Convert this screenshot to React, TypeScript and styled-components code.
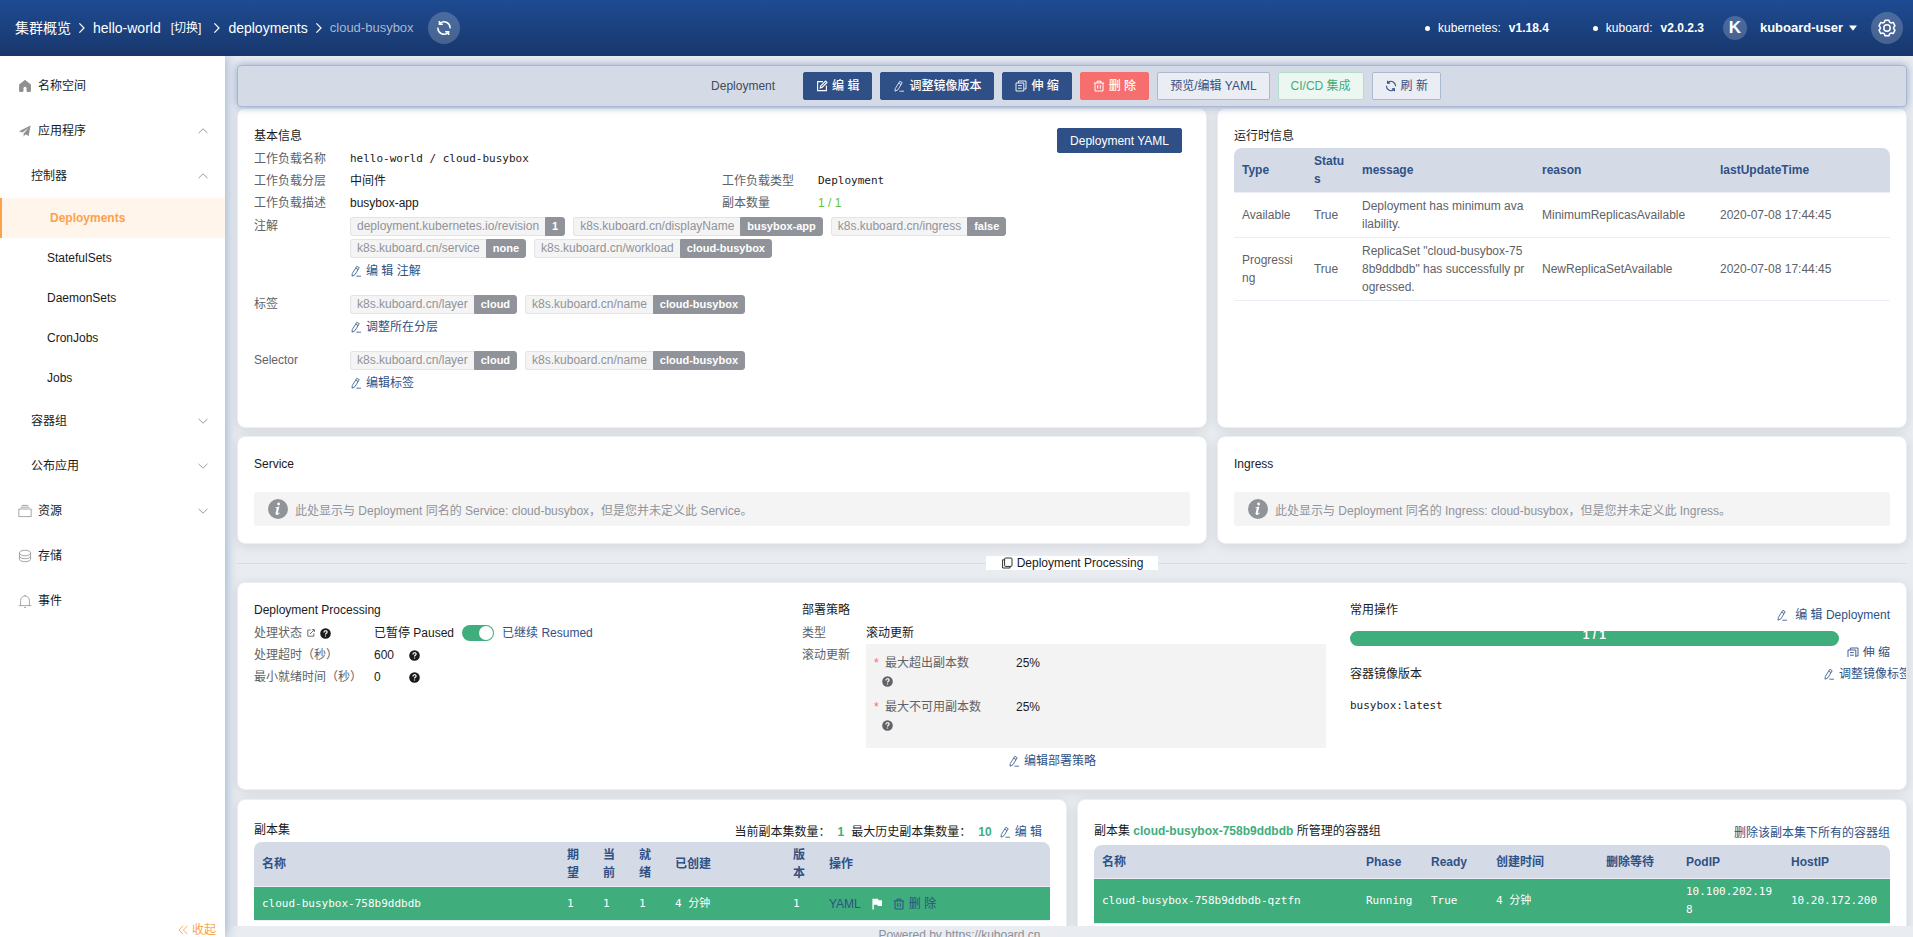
import React from "react";
import styled, { createGlobalStyle, css } from "styled-components";

const navy = "#2f5186";
const green = "#3fad7c";
const orange = "#fda14a";
const headBg = "#d5dbe6";
const sans = `"Liberation Sans", "Noto Sans CJK SC", sans-serif`;
const mono = `"DejaVu Sans Mono", "Noto Sans CJK SC", monospace`;

const GlobalStyle = createGlobalStyle`
  *, *::before, *::after { box-sizing: border-box; }
  body { margin: 0; font-family: ${sans}; font-size: 12px; line-height: 22px; color: #1a1a1a; }
  button { font: inherit; color: inherit; background: none; border: 0; padding: 0; margin: 0; cursor: pointer; }
  a { color: inherit; text-decoration: none; }
  h1, h2, ul { margin: 0; padding: 0; font: inherit; list-style: none; }
  svg { display: block; flex: none; }
`;

/* ---------- icons ---------- */

const Svg = styled.svg.attrs<{ $size?: number }>({ fill: "none", stroke: "currentColor", "aria-hidden": true })<{ $size?: number }>`
  width: ${(p) => p.$size ?? 12}px;
  height: ${(p) => p.$size ?? 12}px;
`;
type IconProps = { size?: number };

const PencilIcon = () => (
  <Svg viewBox="0 0 12 12" strokeWidth="0.8" strokeLinejoin="round">
    <path d="M6.8 1.3 9.2 2.7 5 9.7 2 11.2 2.3 8.5ZM5.7 3.2 8.1 4.6M6.4 11.2H11" />
  </Svg>
);
const EditSquareIcon = () => (
  <Svg viewBox="0 0 12 12" strokeWidth="1.1">
    <path d="M7 1.6H1.6V10.6H10.4V5.5M4.2 7.9 4.6 6 9.6 1 11 2.4 6 7.4Z" />
  </Svg>
);
const DocumentsIcon = () => (
  <Svg viewBox="0 0 12 12" strokeWidth="0.9">
    <path d="M3.4 3V1H11V9H9.2M1 3H8.8V11H1ZM3 5.6H6.8M3 8.2H6.8" />
  </Svg>
);
const CopyIcon = () => (
  <Svg viewBox="0 0 12 12" strokeWidth="0.9">
    <rect x="3.6" y="1" width="7.4" height="8.4" rx="1" />
    <path d="M3.4 2.8H1.6V11H9V9.6" />
  </Svg>
);
const TrashIcon = () => (
  <Svg viewBox="0 0 12 12" strokeWidth="1">
    <path d="M.8 3H11.2M4 3V1.2H8V3M2 3V11H10V3M4.7 5V8.8M7.3 5V8.8" />
  </Svg>
);
const RefreshIcon = ({ size }: IconProps) => (
  <Svg $size={size} viewBox="0 0 16 16" strokeWidth="1.5">
    <path d="M4.2 3.2A6 6 0 0 1 14 8.4M11.8 12.8A6 6 0 0 1 2 7.6M3.4 1V4.2H6.8M12.6 15V11.8H9.2" />
  </Svg>
);
const GearIcon = () => (
  <Svg $size={18} viewBox="0 0 18 18" strokeWidth="1.5" strokeLinejoin="round">
    <path d="M7 1.2H11L11.6 3.2 13.2 4 15.2 3.4 17 6.8 15.6 8.4V9.6L17 11.2 15.2 14.6 13.2 14 11.6 14.8 11 16.8H7L6.4 14.8 4.8 14 2.8 14.6 1 11.2 2.4 9.6V8.4L1 6.8 2.8 3.4 4.8 4 6.4 3.2Z" />
    <circle cx="9" cy="9" r="3.2" />
  </Svg>
);
const HouseIcon = () => (
  <Svg $size={14} viewBox="0 0 14 14" stroke="none">
    <path fill="currentColor" d="M7 1.4 12.4 5.6V12.4H9V9.2A2 2 0 0 0 5 9.2V12.4H1.6V5.6Z" />
  </Svg>
);
const PlaneIcon = () => (
  <Svg $size={14} viewBox="0 0 14 14">
    <path fill="currentColor" stroke="none" d="M12.6 1.6 10.6 12 7.4 10.2 5.6 12.8V9.4L10.8 3.8 4.4 8.6 1 7.2Z" />
  </Svg>
);
const BoxIcon = () => (
  <Svg $size={14} viewBox="0 0 14 14" strokeWidth="0.8">
    <path d="M.8 5H13.2V12.6H.8ZM2.6 3.2H11.4M3.8 1.4H10.2" />
  </Svg>
);
const DiskIcon = () => (
  <Svg $size={14} viewBox="0 0 14 14" strokeWidth="0.8">
    <ellipse cx="7" cy="4" rx="5.6" ry="2.8" />
    <path d="M1.4 4V10C1.4 13.6 12.6 13.6 12.6 10V4M1.4 7C1.4 10.6 12.6 10.6 12.6 7" />
  </Svg>
);
const BellIcon = () => (
  <Svg $size={14} viewBox="0 0 14 14" strokeWidth="0.8">
    <path d="M.6 11.6H13.4M2.6 11.6V6.4A4.4 4.4 0 0 1 11.4 6.4V11.6M7 2V.8M6 13.4H8" />
  </Svg>
);
const ChevronIcon = ({ up }: { up?: boolean }) => (
  <Svg $size={10} viewBox="0 0 10 10" strokeWidth="0.9">
    <path d={up ? "M.5 7.2 5 2.8 9.5 7.2" : "M.5 2.8 5 7.2 9.5 2.8"} />
  </Svg>
);
const ArrowRightIcon = () => (
  <Svg $size={10} viewBox="0 0 10 10" strokeWidth="1.2">
    <path d="M2.4.4 7 5 2.4 9.6" />
  </Svg>
);
const DoubleLeftIcon = () => (
  <Svg $size={10} viewBox="0 0 10 10" strokeWidth="0.9">
    <path d="M5 .8 1 5 5 9.2M9.4.8 5.4 5 9.4 9.2" />
  </Svg>
);
const LinkOutIcon = () => (
  <Svg $size={8} viewBox="0 0 8 8" strokeWidth="0.9">
    <path d="M3.6 1H.8V7.2H6.8V4.4M3 5 7.2.8M4.8.6H7.4V3" />
  </Svg>
);
const QuestionIcon = () => (
  <Svg $size={11} viewBox="0 0 11 11">
    <circle cx="5.5" cy="5.5" r="5.3" fill="currentColor" stroke="none" />
    <path stroke="#fff" strokeWidth="1.2" d="M3.9 4.4C3.9 2.2 7.1 2.2 7.1 4.2 7.1 5.4 5.5 5.3 5.5 6.6M5.5 7.4V8.6" />
  </Svg>
);
const InfoIcon = () => (
  <Svg $size={20} viewBox="0 0 20 20">
    <circle cx="10" cy="10" r="10" fill="currentColor" stroke="none" />
    <path fill="#fff" stroke="none" d="M10.6 3.6A1.4 1.4 0 1 1 10.6 6.4 1.4 1.4 0 1 1 10.6 3.6ZM7.4 8.4 11.4 7.6 9.8 14C9.8 14.8 10.6 14.4 11.4 13.6L11.8 14C10.4 16.4 7.2 16.6 7.6 14.2L8.8 9.2 7.4 9Z" />
  </Svg>
);
const FlagIcon = () => (
  <Svg $size={12} viewBox="0 0 12 12">
    <path fill="currentColor" stroke="none" d="M1.4.8H7L7.6 2.2H11V8H6.8L6.2 6.8H2.8V11.4H1.4Z" />
  </Svg>
);
const CaretIcon = () => (
  <Svg $size={8} viewBox="0 0 8 8">
    <path fill="currentColor" stroke="none" d="M0 1.6H8L4 6.8Z" />
  </Svg>
);

/* ---------- shell ---------- */

const Shell = styled.div`
  display: flex;
  flex-direction: column;
  height: 100vh;
  overflow: hidden;
`;
const Header = styled.header`
  position: relative;
  z-index: 4;
  display: flex;
  align-items: center;
  justify-content: space-between;
  flex: none;
  height: 56px;
  padding: 0 10px 0 15px;
  color: #fff;
  background: linear-gradient(#1e4b92, #18376c);
`;
const Crumbs = styled.nav`
  display: flex;
  align-items: center;
  gap: 6px;
  font-size: 14px;
`;
const CrumbSmall = styled.button`
  padding: 0 5px 0 4px;
  font-size: 12px;
`;
const CrumbCurrent = styled.span`
  font-size: 13px;
  color: #a9b6cd;
`;
const RoundButton = styled.button<{ $gap?: boolean }>`
  display: grid;
  place-items: center;
  width: 32px;
  height: 32px;
  margin-left: ${(p) => (p.$gap ? 8 : 0)}px;
  border-radius: 50%;
  background: rgba(255, 255, 255, 0.2);
`;
const HeaderRight = styled.div`
  display: flex;
  align-items: center;
`;
const Version = styled.div`
  display: flex;
  align-items: center;
  gap: 8px;
  margin-right: 44px;
  &::before {
    content: "";
    width: 5px;
    height: 5px;
    border-radius: 50%;
    background: #fff;
  }
  &:nth-child(2) { margin-right: 19px; }
`;
const Avatar = styled.span`
  display: grid;
  place-items: center;
  width: 24px;
  height: 24px;
  border-radius: 50%;
  background: rgba(255, 255, 255, 0.2);
  font-size: 17px;
  font-weight: bold;
`;
const UserButton = styled.button`
  display: flex;
  align-items: center;
  gap: 6px;
  margin: 0 14px 0 13px;
  font-size: 13px;
  font-weight: bold;
`;
const Body = styled.div`
  display: flex;
  flex: 1;
  min-height: 0;
`;

/* ---------- sidebar ---------- */

const Sidebar = styled.aside`
  position: relative;
  z-index: 3;
  display: flex;
  flex-direction: column;
  justify-content: space-between;
  flex: none;
  width: 225px;
  padding-top: 7px;
  background: #fff;
  box-shadow: 0 0 12px #8ea4c6;
`;
const MenuItem = styled.button<{ $level: 0 | 1 | 2; $active?: boolean }>`
  display: flex;
  align-items: center;
  gap: 6px;
  width: 100%;
  height: ${(p) => (p.$level === 2 ? 40 : 45)}px;
  padding: 0 17px 0 ${(p) => [18, 31, 47][p.$level]}px;
  text-align: left;
  color: #1a1a1a;
  svg { color: #909090; }
  ${(p) =>
    p.$active &&
    css`
      border-left: 2px solid ${orange};
      padding-left: 48px;
      background: #fff5eb;
      color: ${orange};
      font-weight: bold;
    `}
`;
const MenuLabel = styled.span`
  flex: 1;
`;
const Collapse = styled.button`
  display: flex;
  align-items: center;
  align-self: flex-end;
  gap: 4px;
  height: 14px;
  padding-right: 9px;
  line-height: 14px;
  color: ${orange};
`;

/* ---------- main ---------- */

const Main = styled.main`
  display: flex;
  flex-direction: column;
  flex: 1;
  min-width: 0;
  background: #e9ecf1;
`;
const Toolbar = styled.div`
  position: relative;
  z-index: 2;
  display: flex;
  align-items: center;
  justify-content: center;
  gap: 8px;
  flex: none;
  height: 42px;
  margin: 9px 6px 0 12px;
  padding-left: 8px;
  border: 1px solid #a9b7d0;
  border-radius: 4px;
  background: ${headBg};
  box-shadow: 0 0 8px #8ea4c6;
`;
const ToolbarTitle = styled.h1`
  margin-right: 20px;
  color: #404a5c;
`;
type Tone = "primary" | "danger" | "plain" | "success";
const tones: Record<Tone, string> = {
  primary: `background:#2e5087;border-color:#2e5087;color:#fff;font-weight:500;`,
  danger: `background:#f66e6d;border-color:#f66e6d;color:#fff;font-weight:500;`,
  plain: `background:#eaedf3;border-color:#abb9cf;color:${navy};`,
  success: `background:#ecf7f2;border-color:#b2dec9;color:${green};`,
};
const Button = styled.button<{ $tone: Tone; $small?: boolean }>`
  display: flex;
  align-items: center;
  gap: 4px;
  height: ${(p) => (p.$small ? 25 : 28)}px;
  padding: 0 12px;
  border: 1px solid;
  border-radius: 2px;
  white-space: nowrap;
  ${(p) => tones[p.$tone]}
`;
const Scroll = styled.div`
  flex: 1;
  min-height: 0;
  overflow: hidden;
  padding: 1px 6px 0 12px;
`;
const Footer = styled.footer`
  flex: none;
  height: 11px;
  overflow: hidden;
  line-height: 18px;
  text-align: center;
  color: #8b9099;
  padding-right: 219px;
`;
const Row = styled.div<{ $gap: number }>`
  display: flex;
  gap: 10px;
  margin-bottom: ${(p) => p.$gap}px;
`;
const Card = styled.section<{ $span?: number }>`
  ${(p) => (p.$span ? `flex: 0 0 calc((100% + 10px) * ${p.$span} / 24 - 10px);` : "flex: 1;")}
  min-width: 0;
  padding: 17px 16px;
  overflow: hidden;
  border: 1px solid #ebeef5;
  border-radius: 8px;
  background: #fff;
  box-shadow: 0 2px 12px rgba(0, 0, 0, 0.1);
`;
const Title = styled.h2`
  margin-bottom: 2px;
  line-height: 20px;
`;
const TitleRow = styled.div`
  display: flex;
  justify-content: space-between;
  align-items: flex-start;
  height: 22px;
  padding-right: 8px;
`;
const ButtonDrop = styled.div`
  padding-top: 2px;
`;
const Mono = styled.span`
  font-family: ${mono};
  font-size: 11px;
`;
const Link = styled.a`
  display: flex;
  align-items: center;
  gap: 4px;
  width: fit-content;
  color: ${navy};
  white-space: nowrap;
`;

const InfoGrid = styled.div`
  display: grid;
  grid-template-columns: 1fr 1fr;
  grid-auto-rows: minmax(22px, auto);
`;
const Field = styled.div<{ $wide?: boolean; $label?: number }>`
  display: grid;
  grid-template-columns: ${(p) => p.$label ?? 96}px minmax(0, 1fr);
  grid-column: ${(p) => (p.$wide ? "1 / -1" : "auto")};
`;
const Label = styled.span`
  display: flex;
  align-items: center;
  align-self: start;
  gap: 5px;
  height: 22px;
  color: #606266;
`;
const Ok = styled.span`
  color: #67c23a;
`;
const TagField = styled(Field)`
  margin: 1px 0 10px;
  &:last-child { margin-bottom: 16px; }
`;
const Tags = styled.div`
  display: flex;
  flex-wrap: wrap;
  column-gap: 8px;
  row-gap: 3px;
  padding: 2px 0;
`;
const Tag = styled.span`
  display: flex;
  height: 19px;
  line-height: 17px;
`;
const TagKey = styled.span`
  padding: 0 6px;
  border: 1px solid #e4e4e6;
  border-right: 0;
  border-radius: 3px 0 0 3px;
  background: #f4f4f5;
  color: #909399;
`;
const TagValue = styled.span`
  padding: 0 6px;
  border: 1px solid #909399;
  border-radius: 0 3px 3px 0;
  background: #909399;
  color: #fff;
  font-size: 11px;
  font-weight: bold;
`;

/* ---------- tables ---------- */

const Table = styled.table<{ $mono?: boolean }>`
  width: 100%;
  table-layout: fixed;
  border-collapse: separate;
  border-spacing: 0;
  line-height: 18px;
  th, td {
    padding: 4px 8px;
    border-bottom: 1px solid #ebeef5;
    text-align: left;
    word-break: break-all;
  }
  tr { height: 34px; }
  th { background: ${headBg}; color: ${navy}; font-weight: bold; }
  th:first-child { border-top-left-radius: 8px; }
  th:last-child { border-top-right-radius: 8px; }
  td { color: #606266; }
  ${(p) =>
    p.$mono &&
    css`
      td { background: ${green}; color: #fff; font-family: ${mono}; font-size: 11px; }
    `}
`;
const CellActions = styled.div`
  display: flex;
  align-items: center;
  gap: 10px;
  font-family: ${sans};
  font-size: 12px;
`;

/* ---------- notices and divider ---------- */

const Notice = styled.div`
  display: flex;
  align-items: center;
  gap: 7px;
  height: 34px;
  margin-top: 18px;
  padding: 0 14px;
  border-radius: 3px;
  background: #f4f4f5;
  color: #909399;
`;
const NoticeText = styled.span`
  padding-top: 4px;
`;
const Divider = styled.div`
  display: flex;
  align-items: center;
  height: 38px;
  &::before, &::after {
    content: "";
    flex: 1;
    height: 1px;
    background: #d8dce3;
  }
`;
const DividerText = styled.span`
  display: flex;
  align-items: center;
  gap: 4px;
  height: 14px;
  padding: 0 15px;
  background: #fff;
`;

/* ---------- processing ---------- */

const Columns = styled.div`
  display: grid;
  grid-template-columns: repeat(3, minmax(0, 1fr));
  column-gap: 8px;
`;
const Inline = styled.span<{ $gap: number }>`
  display: flex;
  align-items: center;
  gap: ${(p) => p.$gap}px;
`;
const Dark = styled.span`
  display: flex;
  align-items: center;
  gap: 5px;
  color: #1a1a1a;
`;
const Digits = styled.span`
  min-width: 20px;
`;
const Blue = styled.span`
  color: ${navy};
`;
const Switch = styled.input.attrs({ type: "checkbox", role: "switch" })`
  appearance: none;
  display: flex;
  justify-content: flex-end;
  width: 32px;
  height: 16px;
  margin: 0;
  padding: 1px;
  border-radius: 8px;
  background: ${green};
  &::before {
    content: "";
    width: 14px;
    height: 14px;
    border-radius: 50%;
    background: #fff;
  }
  &:not(:checked) { justify-content: flex-start; background: #c0ccda; }
`;
const StrategyBox = styled.div`
  display: grid;
  align-content: start;
  row-gap: 4px;
  height: 104px;
  margin-right: 16px;
  padding: 9px 8px;
  background: #f3f3f3;
`;
const StrategyItem = styled.div`
  display: grid;
  grid-template-columns: 142px 1fr;
  line-height: 20px;
`;
const StrategyLabel = styled.div`
  display: grid;
  grid-template-columns: 11px 1fr;
  align-content: start;
  height: 40px;
  color: #606266;
  &::before { content: "*"; color: #f56c6c; }
  svg { grid-column: 1 / -1; margin: 3px 0 0 8px; }
`;
const StrategyLink = styled.div`
  display: flex;
  justify-content: center;
  padding: 2px 40px 0 0;
`;
const OpsHead = styled.div`
  display: flex;
  justify-content: space-between;
  height: 31px;
`;
const OpsLink = styled.div`
  padding-top: 4px;
`;
const ScaleRow = styled.div`
  display: flex;
  gap: 8px;
  height: 26px;
  overflow: hidden;
  a { height: 22px; margin-top: 11px; }
`;
const Progress = styled.div`
  flex: 1;
  height: 15px;
  overflow: hidden;
  border-radius: 8px;
  background: ${green};
  color: #fff;
  font-weight: bold;
  line-height: 8px;
  text-align: center;
`;
const ImageRow = styled.div`
  display: grid;
  grid-template-columns: 1fr 67px;
  margin: 6px 0 9px;
`;

/* ---------- replica sets ---------- */

const ListHead = styled.div<{ $tall?: boolean }>`
  display: flex;
  justify-content: space-between;
  align-items: center;
  height: ${(p) => (p.$tall ? 28 : 25)}px;
`;
const ListTools = styled.div<{ $inset?: boolean }>`
  display: flex;
  align-items: center;
  gap: 7px;
  padding: 4px ${(p) => (p.$inset ? 8 : 0)}px 0 0;
`;
const Strong = styled.b`
  color: ${green};
`;

const keyTags = (items: [string, string][]) => (
  <Tags>
    {items.map(([k, v]) => (
      <Tag key={k}>
        <TagKey>{k}</TagKey>
        <TagValue>{v}</TagValue>
      </Tag>
    ))}
  </Tags>
);

const shared: [string, string][] = [
  ["k8s.kuboard.cn/layer", "cloud"],
  ["k8s.kuboard.cn/name", "cloud-busybox"],
];

type Entry = { text: string; level: 0 | 1 | 2; icon?: React.ReactNode; open?: boolean; active?: boolean };
const menu: Entry[] = [
  { text: "名称空间", level: 0, icon: <HouseIcon /> },
  { text: "应用程序", level: 0, icon: <PlaneIcon />, open: true },
  { text: "控制器", level: 1, open: true },
  { text: "Deployments", level: 2, active: true },
  { text: "StatefulSets", level: 2 },
  { text: "DaemonSets", level: 2 },
  { text: "CronJobs", level: 2 },
  { text: "Jobs", level: 2 },
  { text: "容器组", level: 1, open: false },
  { text: "公布应用", level: 1, open: false },
  { text: "资源", level: 0, icon: <BoxIcon />, open: false },
  { text: "存储", level: 0, icon: <DiskIcon /> },
  { text: "事件", level: 0, icon: <BellIcon /> },
];

export default function App() {
  const [resumed, setResumed] = React.useState(true);
  return (
    <Shell>
      <GlobalStyle />
      <Header>
        <Crumbs>
          <a href="#cluster">集群概览</a>
          <ArrowRightIcon />
          <a href="#namespace">hello-world</a>
          <CrumbSmall type="button">[切换]</CrumbSmall>
          <ArrowRightIcon />
          <a href="#deployments">deployments</a>
          <ArrowRightIcon />
          <CrumbCurrent>cloud-busybox</CrumbCurrent>
          <RoundButton type="button" aria-label="刷新" $gap>
            <RefreshIcon size={16} />
          </RoundButton>
        </Crumbs>
        <HeaderRight>
          <Version>
            <span>kubernetes:</span>
            <b>v1.18.4</b>
          </Version>
          <Version>
            <span>kuboard:</span>
            <b>v2.0.2.3</b>
          </Version>
          <Avatar>K</Avatar>
          <UserButton type="button">
            kuboard-user <CaretIcon />
          </UserButton>
          <RoundButton type="button" aria-label="设置">
            <GearIcon />
          </RoundButton>
        </HeaderRight>
      </Header>
      <Body>
        <Sidebar>
          <nav>
            {menu.map((m) => (
              <MenuItem key={m.text} type="button" $level={m.level} $active={m.active}>
                {m.icon}
                <MenuLabel>{m.text}</MenuLabel>
                {m.open !== undefined && <ChevronIcon up={m.open} />}
              </MenuItem>
            ))}
          </nav>
          <Collapse type="button">
            <DoubleLeftIcon />
            收起
          </Collapse>
        </Sidebar>
        <Main>
          <Toolbar>
            <ToolbarTitle>Deployment</ToolbarTitle>
            <Button type="button" $tone="primary"><EditSquareIcon />编 辑</Button>
            <Button type="button" $tone="primary"><PencilIcon />调整镜像版本</Button>
            <Button type="button" $tone="primary"><DocumentsIcon />伸 缩</Button>
            <Button type="button" $tone="danger"><TrashIcon />删 除</Button>
            <Button type="button" $tone="plain">预览/编辑 YAML</Button>
            <Button type="button" $tone="success">CI/CD 集成</Button>
            <Button type="button" $tone="plain"><RefreshIcon />刷 新</Button>
          </Toolbar>
          <Scroll>
            <Row $gap={8}>
              <Card $span={14}>
                <TitleRow>
                  <Title>基本信息</Title>
                  <ButtonDrop>
                    <Button type="button" $tone="primary" $small>Deployment YAML</Button>
                  </ButtonDrop>
                </TitleRow>
                <InfoGrid>
                  <Field $wide>
                    <Label>工作负载名称</Label>
                    <Mono>hello-world / cloud-busybox</Mono>
                  </Field>
                  <Field>
                    <Label>工作负载分层</Label>
                    <span>中间件</span>
                  </Field>
                  <Field>
                    <Label>工作负载类型</Label>
                    <Mono>Deployment</Mono>
                  </Field>
                  <Field>
                    <Label>工作负载描述</Label>
                    <span>busybox-app</span>
                  </Field>
                  <Field>
                    <Label>副本数量</Label>
                    <Ok>1 / 1</Ok>
                  </Field>
                  <TagField $wide>
                    <Label>注解</Label>
                    <div>
                      {keyTags([
                        ["deployment.kubernetes.io/revision", "1"],
                        ["k8s.kuboard.cn/displayName", "busybox-app"],
                        ["k8s.kuboard.cn/ingress", "false"],
                        ["k8s.kuboard.cn/service", "none"],
                        ["k8s.kuboard.cn/workload", "cloud-busybox"],
                      ])}
                      <Link href="#annotations"><PencilIcon />编 辑 注解</Link>
                    </div>
                  </TagField>
                  <TagField $wide>
                    <Label>标签</Label>
                    <div>
                      {keyTags(shared)}
                      <Link href="#layer"><PencilIcon />调整所在分层</Link>
                    </div>
                  </TagField>
                  <TagField $wide>
                    <Label>Selector</Label>
                    <div>
                      {keyTags(shared)}
                      <Link href="#labels"><PencilIcon />编辑标签</Link>
                    </div>
                  </TagField>
                </InfoGrid>
              </Card>
              <Card>
                <Title>运行时信息</Title>
                <Table>
                  <colgroup>
                    <col width="72" />
                    <col width="48" />
                    <col width="180" />
                    <col />
                    <col />
                  </colgroup>
                  <thead>
                    <tr>
                      <th>Type</th>
                      <th>Status</th>
                      <th>message</th>
                      <th>reason</th>
                      <th>lastUpdateTime</th>
                    </tr>
                  </thead>
                  <tbody>
                    <tr>
                      <td>Available</td>
                      <td>True</td>
                      <td>Deployment has minimum availability.</td>
                      <td>MinimumReplicasAvailable</td>
                      <td>2020-07-08 17:44:45</td>
                    </tr>
                    <tr>
                      <td>Progressing</td>
                      <td>True</td>
                      <td>ReplicaSet "cloud-busybox-758b9ddbdb" has successfully progressed.</td>
                      <td>NewReplicaSetAvailable</td>
                      <td>2020-07-08 17:44:45</td>
                    </tr>
                  </tbody>
                </Table>
              </Card>
            </Row>
            <Row $gap={0}>
              <Card $span={14}>
                <Title>Service</Title>
                <Notice>
                  <InfoIcon />
                  <NoticeText>此处显示与 Deployment 同名的 Service: cloud-busybox，但是您并未定义此 Service。</NoticeText>
                </Notice>
              </Card>
              <Card>
                <Title>Ingress</Title>
                <Notice>
                  <InfoIcon />
                  <NoticeText>此处显示与 Deployment 同名的 Ingress: cloud-busybox，但是您并未定义此 Ingress。</NoticeText>
                </Notice>
              </Card>
            </Row>
            <Divider>
              <DividerText><CopyIcon />Deployment Processing</DividerText>
            </Divider>
            <Row $gap={9}>
              <Card>
                <Columns>
                  <div>
                    <Title>Deployment Processing</Title>
                    <Field $label={120}>
                      <Label as="label" htmlFor="resume">
                        处理状态 <LinkOutIcon />
                        <Dark><QuestionIcon /></Dark>
                      </Label>
                      <Inline $gap={8}>
                        已暂停 Paused
                        <Switch id="resume" checked={resumed} onChange={(e) => setResumed(e.target.checked)} />
                        <Blue>已继续 Resumed</Blue>
                      </Inline>
                    </Field>
                    <Field $label={120}>
                      <Label>处理超时（秒）</Label>
                      <Inline $gap={15}><Digits>600</Digits> <QuestionIcon /></Inline>
                    </Field>
                    <Field $label={120}>
                      <Label>最小就绪时间（秒）</Label>
                      <Inline $gap={15}><Digits>0</Digits> <QuestionIcon /></Inline>
                    </Field>
                  </div>
                  <div>
                    <Title>部署策略</Title>
                    <Field $label={64}>
                      <Label>类型</Label>
                      <span>滚动更新</span>
                    </Field>
                    <Field $label={64}>
                      <Label>滚动更新</Label>
                      <StrategyBox>
                        <StrategyItem>
                          <StrategyLabel>最大超出副本数 <QuestionIcon /></StrategyLabel>
                          25%
                        </StrategyItem>
                        <StrategyItem>
                          <StrategyLabel>最大不可用副本数 <QuestionIcon /></StrategyLabel>
                          25%
                        </StrategyItem>
                      </StrategyBox>
                    </Field>
                    <StrategyLink>
                      <Link href="#strategy"><PencilIcon />编辑部署策略</Link>
                    </StrategyLink>
                  </div>
                  <div>
                    <OpsHead>
                      <Title>常用操作</Title>
                      <OpsLink>
                        <Link href="#edit"><PencilIcon />&nbsp;编 辑 Deployment</Link>
                      </OpsLink>
                    </OpsHead>
                    <ScaleRow>
                      <Progress>1 / 1</Progress>
                      <Link href="#scale"><DocumentsIcon />伸 缩</Link>
                    </ScaleRow>
                    <ImageRow>
                      <span>容器镜像版本</span>
                      <Link href="#image"><PencilIcon />调整镜像标签</Link>
                    </ImageRow>
                    <Mono>busybox:latest</Mono>
                  </div>
                </Columns>
              </Card>
            </Row>
            <Row $gap={0}>
              <Card $span={12}>
                <ListHead>
                  <h2>副本集</h2>
                  <ListTools $inset>
                    <span>当前副本集数量：</span>
                    <Strong>1</Strong>
                    <span>最大历史副本集数量：</span>
                    <Strong>10</Strong>
                    <Link href="#history"><PencilIcon />编 辑</Link>
                  </ListTools>
                </ListHead>
                <Table $mono>
                  <colgroup>
                    <col />
                    <col width="36" />
                    <col width="36" />
                    <col width="36" />
                    <col width="118" />
                    <col width="36" />
                    <col width="229" />
                  </colgroup>
                  <thead>
                    <tr>
                      <th>名称</th>
                      <th>期望</th>
                      <th>当前</th>
                      <th>就绪</th>
                      <th>已创建</th>
                      <th>版本</th>
                      <th>操作</th>
                    </tr>
                  </thead>
                  <tbody>
                    <tr>
                      <td>cloud-busybox-758b9ddbdb</td>
                      <td>1</td>
                      <td>1</td>
                      <td>1</td>
                      <td>4 分钟</td>
                      <td>1</td>
                      <td>
                        <CellActions>
                          <Link href="#yaml">YAML</Link>
                          <FlagIcon />
                          <Link href="#delete"><TrashIcon />删 除</Link>
                        </CellActions>
                      </td>
                    </tr>
                  </tbody>
                </Table>
              </Card>
              <Card>
                <ListHead $tall>
                  <h2>
                    副本集 <Strong>cloud-busybox-758b9ddbdb</Strong> 所管理的容器组
                  </h2>
                  <ListTools>
                    <Link href="#delete-pods">删除该副本集下所有的容器组</Link>
                  </ListTools>
                </ListHead>
                <Table $mono>
                  <colgroup>
                    <col />
                    <col width="65" />
                    <col width="65" />
                    <col width="110" />
                    <col width="80" />
                    <col width="105" />
                    <col width="107" />
                  </colgroup>
                  <thead>
                    <tr>
                      <th>名称</th>
                      <th>Phase</th>
                      <th>Ready</th>
                      <th>创建时间</th>
                      <th>删除等待</th>
                      <th>PodIP</th>
                      <th>HostIP</th>
                    </tr>
                  </thead>
                  <tbody>
                    <tr>
                      <td>cloud-busybox-758b9ddbdb-qztfn</td>
                      <td>Running</td>
                      <td>True</td>
                      <td>4 分钟</td>
                      <td />
                      <td>10.100.202.198</td>
                      <td>10.20.172.200</td>
                    </tr>
                  </tbody>
                </Table>
              </Card>
            </Row>
          </Scroll>
          <Footer>
            Powered by <a href="#kuboard">https://kuboard.cn</a>
          </Footer>
        </Main>
      </Body>
    </Shell>
  );
}
